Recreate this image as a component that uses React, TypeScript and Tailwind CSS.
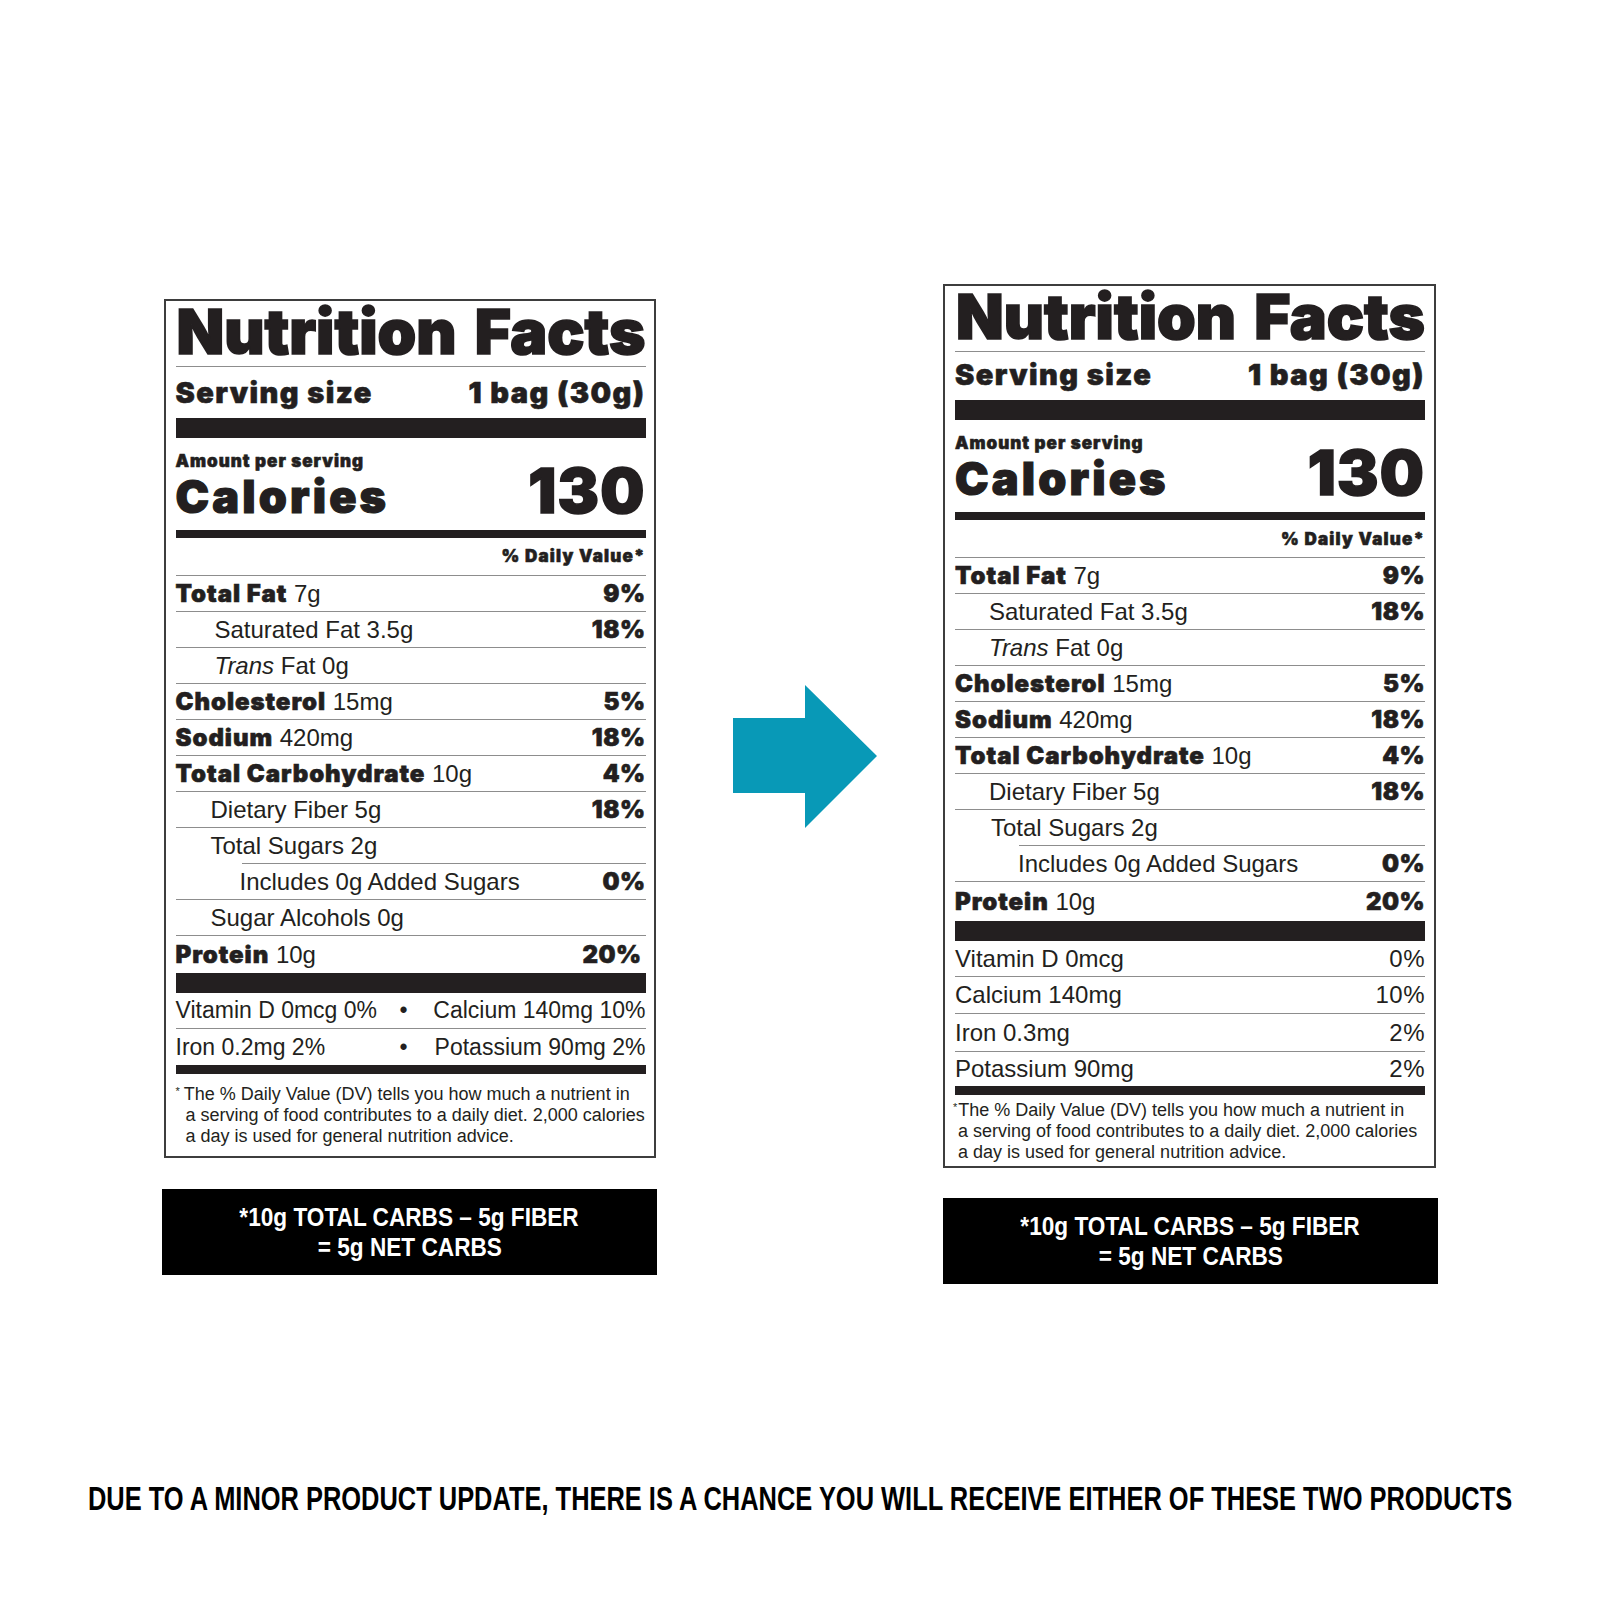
import React from "react";

const HEAVY = "font-['Inter',sans-serif] font-black [-webkit-text-stroke:0.6px_#231f20]";
const NARROW = "font-['Liberation_Sans',Arial,sans-serif] font-bold";

/* 얇은 구분선 */
function Rule({ className = "" }: { className?: string }) {
  return <div className={`h-px bg-[#8d8d8d] ${className}`} />;
}

/* 영양성분 한 줄 */
function Row({
  children,
  pct,
  className = "",
  height = "h-[35px]",
  pctClass = HEAVY,
}: {
  children: React.ReactNode;
  pct?: string;
  className?: string;
  height?: string;
  pctClass?: string;
}) {
  return (
    <div
      className={`flex items-center justify-between whitespace-nowrap text-[24px] leading-none ${height} ${className}`}
    >
      <span>{children}</span>
      {pct && <span className={`tracking-[0.02em] ${pctClass}`}>{pct}</span>}
    </div>
  );
}

function Bold({ children }: { children: React.ReactNode }) {
  return <b className={`tracking-[0.04em] ${HEAVY}`}>{children}</b>;
}

function Label({ variant }: { variant: "old" | "new" }) {
  const isOld = variant === "old";

  return (
    <div
      className={
        isOld
          ? "w-[492px] border-2 border-[#3d3d3d] pl-[10px] pr-[8px]"
          : "w-[493px] border-2 border-[#3d3d3d] pl-[10px] pr-[9px]"
      }
    >
      {/* 제목 */}
      <div
        className={`flex h-[66px] justify-between border-b border-[#8d8d8d] pl-[1px] text-[62px] leading-none font-['Inter',sans-serif] font-black [-webkit-text-stroke:1.6px_#231f20]`}
      >
        <span>Nutrition</span>
        <span>Facts</span>
      </div>

      {/* 1회 제공량 */}
      <div
        className={`flex justify-between text-[29px] leading-none tracking-[0.05em] ${HEAVY} ${
          isOld ? "h-[51px] pt-[11px]" : "h-[48px] pt-[8px]"
        }`}
      >
        <span>Serving size</span>
        <span>1 bag (30g)</span>
      </div>
      <div className="h-[20px] bg-[#231f20]" />

      {/* 칼로리 */}
      <div className={`h-[92px] pt-[15px] ${HEAVY}`}>
        <div className="text-[17px] leading-none tracking-[0.06em]">Amount per serving</div>
        <div className="-mt-[10px] flex items-baseline justify-between leading-none">
          <span className="text-[45px] tracking-[0.07em] [-webkit-text-stroke:1.2px_#231f20]">
            Calories
          </span>
          <span className="text-[62px] tracking-[0.02em] [-webkit-text-stroke:1.6px_#231f20]">130</span>
        </div>
      </div>
      <div className="h-[8px] bg-[#231f20]" />

      <div
        className={`h-[38px] border-b border-[#8d8d8d] text-right text-[17px] leading-none tracking-[0.07em] ${HEAVY} ${
          isOld ? "pt-[10px]" : "pt-[11px]"
        }`}
      >
        % Daily Value*
      </div>

      {/* 영양성분 목록 */}
      <Row pct="9%">
        <Bold>Total Fat</Bold> 7g
      </Row>
      <Rule />
      <Row pct="18%" className={isOld ? "pl-[39px]" : "pl-[34px]"}>
        Saturated Fat 3.5g
      </Row>
      <Rule />
      <Row className={isOld ? "pl-[39px]" : "pl-[34px]"}>
        <i>Trans</i> Fat 0g
      </Row>
      <Rule />
      <Row pct="5%">
        <Bold>Cholesterol</Bold> 15mg
      </Row>
      <Rule />
      <Row pct="18%">
        <Bold>Sodium</Bold> 420mg
      </Row>
      <Rule />
      <Row pct="4%">
        <Bold>Total Carbohydrate</Bold> 10g
      </Row>
      <Rule />
      <Row pct="18%" className={isOld ? "pl-[35px]" : "pl-[34px]"}>
        Dietary Fiber 5g
      </Row>
      <Rule />
      <Row className={isOld ? "pl-[35px]" : "pl-[36px]"}>Total Sugars 2g</Row>
      <Rule className={isOld ? "ml-[66px]" : "ml-[64px]"} />
      <Row pct="0%" className={isOld ? "pl-[64px]" : "pl-[63px]"}>
        Includes 0g Added Sugars
      </Row>
      <Rule />
      {isOld && (
        <>
          <Row className="pl-[35px]">Sugar Alcohols 0g</Row>
          <Rule />
        </>
      )}
      <Row pct="20%" height={isOld ? "h-[37px]" : "h-[39px]"} className={isOld ? "pr-[4px]" : ""}>
        <Bold>Protein</Bold> 10g
      </Row>
      <div className="h-[20px] bg-[#231f20]" />

      {/* 비타민, 미네랄 */}
      {isOld ? (
        <>
          <div className="flex h-[35px] items-center whitespace-nowrap text-[23px] leading-none">
            <span className="w-[224px]">Vitamin D 0mcg 0%</span>
            <span>•</span>
            <span className="ml-auto">Calcium 140mg 10%</span>
          </div>
          <Rule />
          <div className="flex h-[36px] items-center whitespace-nowrap text-[23px] leading-none">
            <span className="w-[224px]">Iron 0.2mg 2%</span>
            <span>•</span>
            <span className="ml-auto">Potassium 90mg 2%</span>
          </div>
        </>
      ) : (
        <>
          <Row pct="0%" pctClass="">
            Vitamin D 0mcg
          </Row>
          <Rule />
          <Row pct="10%" pctClass="" height="h-[36px]">
            Calcium 140mg
          </Row>
          <Rule />
          <Row pct="2%" pctClass="" height="h-[37px]">
            Iron 0.3mg
          </Row>
          <Rule />
          <Row pct="2%" pctClass="" height="h-[34px]">
            Potassium 90mg
          </Row>
        </>
      )}
      <div className="h-[9px] bg-[#231f20]" />

      {/* 각주 */}
      <p
        className={`whitespace-nowrap text-[18px] leading-[21px] ${
          isOld ? "pt-[10px] pb-[9px] pl-[10px] -indent-[10px]" : "pt-[5px] pb-[3px] pl-[3px] -indent-[5px]"
        }`}
      >
        <sup className={isOld ? "mr-[4px] text-[11px]" : "mr-[1px] text-[11px]"}>*</sup>
        The % Daily Value (DV) tells you how much a nutrient in
        <br />
        a serving of food contributes to a daily diet. 2,000 calories
        <br />
        a day is used for general nutrition advice.
      </p>
    </div>
  );
}

function NetCarbs({ className = "" }: { className?: string }) {
  return (
    <div
      className={`flex h-[86px] w-[495px] flex-col items-center justify-center bg-black text-center text-[26px] leading-[30px] text-white ${NARROW} ${className}`}
    >
      <span className="scale-x-[0.87] whitespace-nowrap">*10g TOTAL CARBS – 5g FIBER</span>
      <span className="scale-x-[0.87] whitespace-nowrap">= 5g NET CARBS</span>
    </div>
  );
}

function Arrow() {
  return (
    <svg width="144" height="143" viewBox="0 0 144 143">
      <polygon points="0,33 72,33 72,0 144,71 72,143 72,108 0,108" fill="#0899b7" />
    </svg>
  );
}

export default function App() {
  return (
    <main className="h-[1600px] w-[1600px] overflow-hidden bg-white font-['Liberation_Sans',Arial,sans-serif] text-[#231f20]">
      <div className="flex items-start pl-[162px] pt-[284px]">
        {/* 기존 제품 */}
        <div className="mt-[15px] flex w-[495px] flex-col items-center">
          <Label variant="old" />
          <NetCarbs className="mt-[31px]" />
        </div>

        {/* 화살표 */}
        <div className="ml-[76px] mt-[401px]">
          <Arrow />
        </div>

        {/* 변경 제품 */}
        <div className="ml-[66px] flex w-[495px] flex-col items-start">
          <Label variant="new" />
          <NetCarbs className="mt-[30px]" />
        </div>
      </div>

      <div className="mt-[197px] flex justify-center">
        <span
          className={`shrink-0 scale-x-[0.748] whitespace-nowrap text-[34px] leading-none text-black ${NARROW}`}
        >
          DUE TO A MINOR PRODUCT UPDATE, THERE IS A CHANCE YOU WILL RECEIVE EITHER OF THESE TWO PRODUCTS
        </span>
      </div>
    </main>
  );
}
